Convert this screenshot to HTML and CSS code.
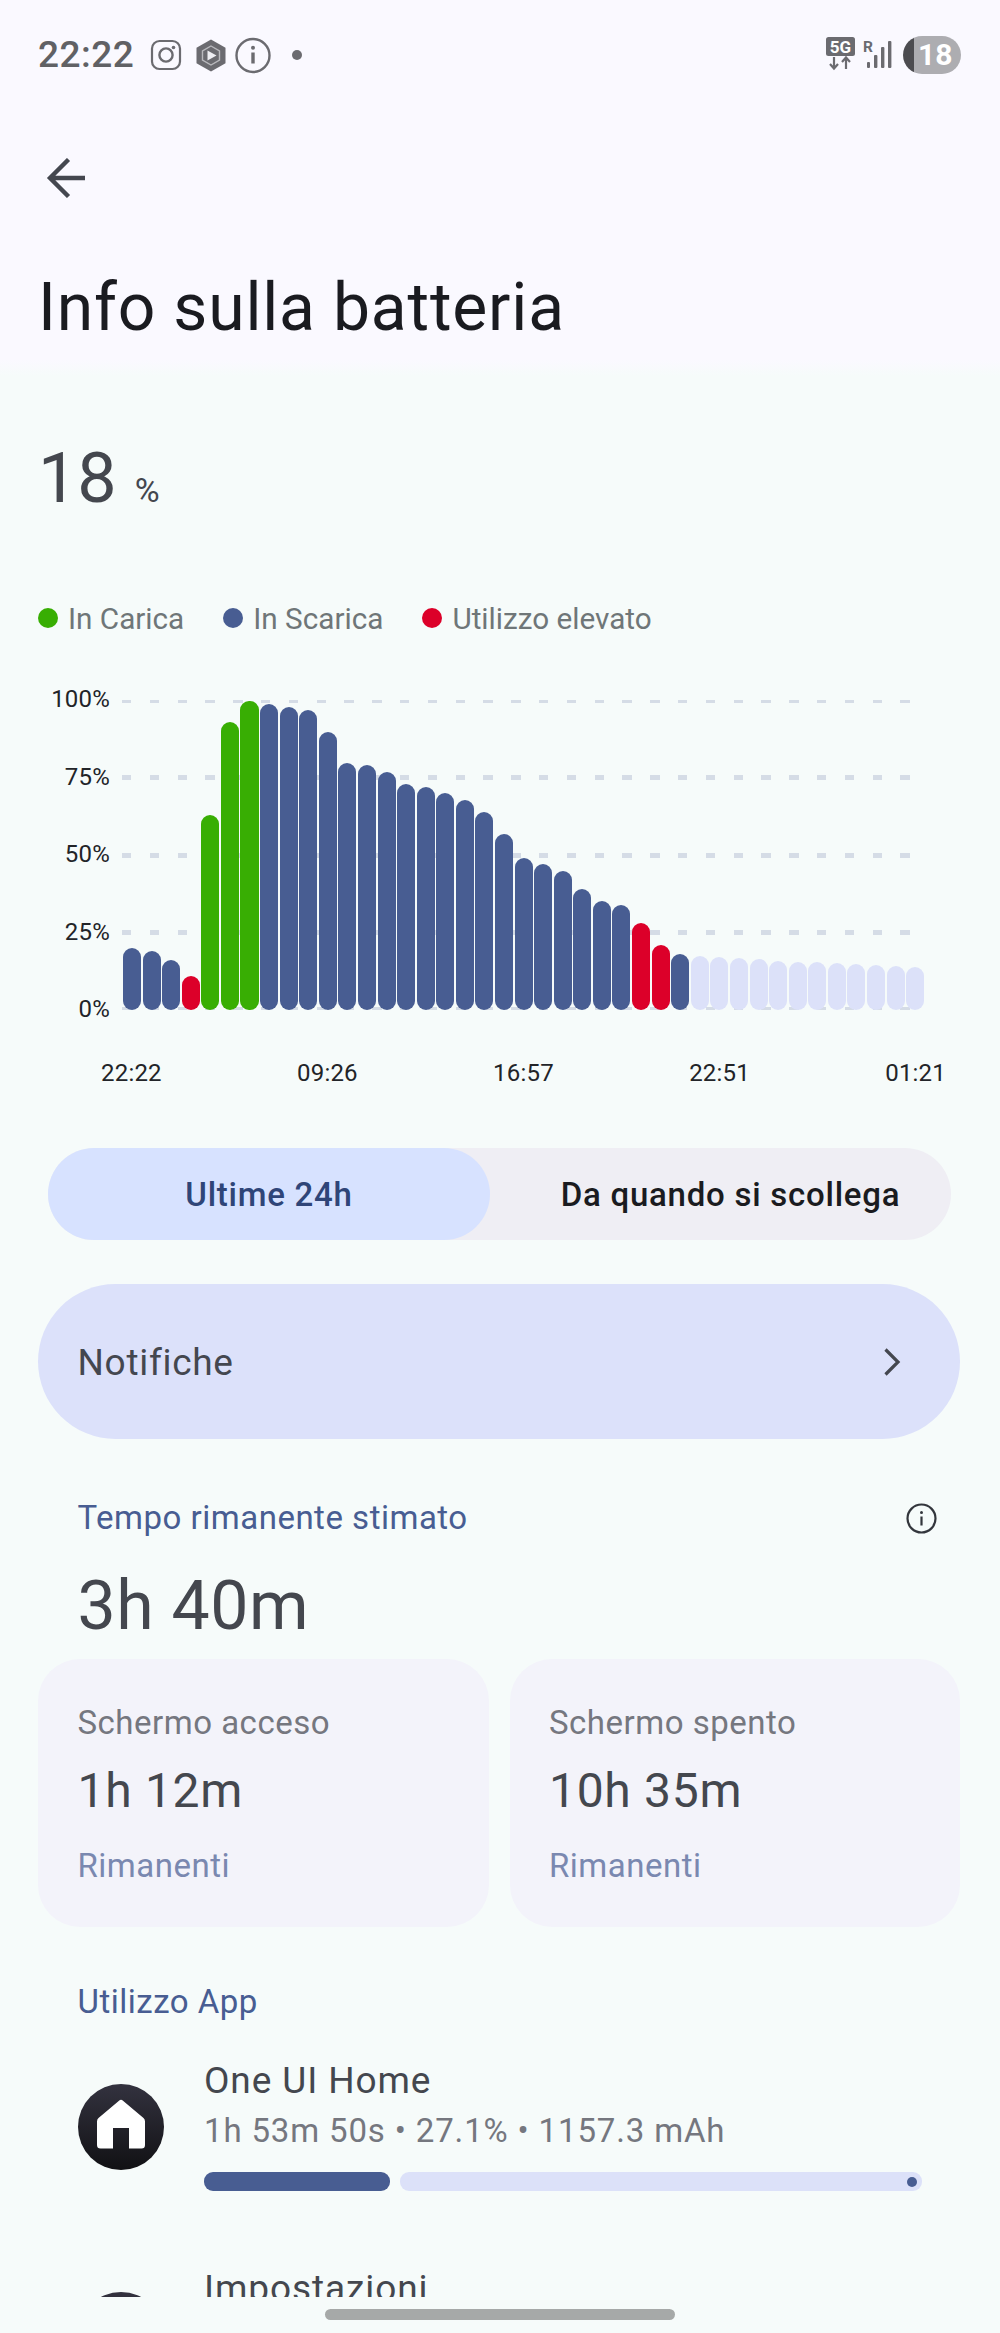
FILE: index.html
```html
<!DOCTYPE html>
<html lang="it">
<head>
<meta charset="utf-8">
<title>Info sulla batteria</title>
<link rel="stylesheet" href="styles.css">
</head>
<body>
<div class="content">
  <header class="status">
    <div class="status-left">
      <span class="clock">22:22</span>
      <svg class="ic-insta" width="32" height="32" viewBox="0 0 32 32"><rect x="2" y="2" width="28" height="28" rx="7.5" fill="none" stroke="#6b6b70" stroke-width="2.2"/><circle cx="16" cy="16" r="6.6" fill="none" stroke="#6b6b70" stroke-width="2.4"/><circle cx="23.5" cy="8.5" r="1.8" fill="#6b6b70"/></svg>
      <svg class="ic-hex" width="30" height="33" viewBox="0 0 30 33"><path d="M15 .5 29.5 8.700V24.300L15 32.500.5 24.300V8.700Z" fill="#6b6b70"/><path d="M15 7 23.500 11.800V21.200L15 26 6.500 21.200V11.800Z" fill="none" stroke="#b9b9bd" stroke-width="1.400"/><path d="M11.500 11.500 20.500 16.500 11.500 21.500Z" fill="#eeeef2"/></svg>
      <svg class="ic-info" width="36" height="37" viewBox="0 0 36 37"><circle cx="18" cy="18.500" r="16.500" fill="none" stroke="#6b6b70" stroke-width="2.400"/><rect x="16.300" y="15.500" width="3.400" height="11" fill="#6b6b70"/><circle cx="18" cy="10.800" r="2" fill="#6b6b70"/></svg>
      <span class="dot-note"></span>
    </div>
    <div class="status-right">
      <svg class="ic-net" width="30" height="36" viewBox="0 0 30 36"><rect x="0" y="0" width="29" height="19" rx="2.500" fill="#6b6b70"/><text x="14.500" y="15.800" class="net-text" text-anchor="middle">5G</text><path d="M8 20V31M4 27 8 31.500 12 27M20 32V21M16 25 20 20.500 24 25" fill="none" stroke="#6b6b70" stroke-width="2.200"/></svg>
      <svg class="ic-signal" width="32" height="38" viewBox="0 0 32 38"><text x="0" y="16" class="roam-text">R</text><rect x="4" y="26" width="3" height="6" rx="1" fill="#6b6b70"/><rect x="11" y="19" width="3.400" height="13" rx="1" fill="#6b6b70"/><rect x="18" y="11" width="3.400" height="21" rx="1" fill="#6b6b70"/><rect x="25" y="5" width="3.400" height="27" rx="1" fill="#6b6b70"/></svg>
      <span class="battery">18</span>
    </div>
  </header>

  <div class="toolbar">
    <svg width="40" height="40" viewBox="0 0 40 40"><path d="M39 20H4M22.500 1.500 4 20 22.500 38.500" fill="none" stroke="#44474f" stroke-width="4.400"/></svg>
  </div>
  <h1 class="title">Info sulla batteria</h1>

  <div class="level"><span class="level-num">18</span><span class="level-unit">%</span></div>

  <div class="legend">
    <span class="legend-item"><i class="dot dot-green"></i>In Carica</span>
    <span class="legend-item"><i class="dot dot-blue"></i>In Scarica</span>
    <span class="legend-item"><i class="dot dot-red"></i>Utilizzo elevato</span>
  </div>

  <div class="chart">
    <div class="y-axis"><span>100%</span><span>75%</span><span>50%</span><span>25%</span><span>0%</span></div>
    <div class="plot">
      <div class="gridlines">
        <span class="gl gl-thin"></span><span class="gl"></span><span class="gl"></span><span class="gl"></span><span class="gl gl-thin"></span>
      </div>
      <div class="bars">
        <i class="bar blue" style="height:62px"></i><i class="bar blue" style="height:59px"></i><i class="bar blue" style="height:50px"></i><i class="bar red" style="height:34px"></i>
        <i class="bar green" style="height:195px"></i><i class="bar green" style="height:288px"></i><i class="bar green" style="height:309px"></i>
        <i class="bar blue" style="height:306px"></i><i class="bar blue" style="height:303px"></i><i class="bar blue" style="height:300px"></i><i class="bar blue" style="height:278px"></i><i class="bar blue" style="height:247px"></i><i class="bar blue" style="height:245px"></i><i class="bar blue" style="height:238px"></i><i class="bar blue" style="height:226px"></i><i class="bar blue" style="height:223px"></i><i class="bar blue" style="height:217px"></i><i class="bar blue" style="height:210px"></i><i class="bar blue" style="height:198px"></i><i class="bar blue" style="height:176px"></i><i class="bar blue" style="height:152px"></i><i class="bar blue" style="height:146px"></i><i class="bar blue" style="height:139px"></i><i class="bar blue" style="height:121px"></i><i class="bar blue" style="height:109px"></i><i class="bar blue" style="height:105px"></i>
        <i class="bar red" style="height:87px"></i><i class="bar red" style="height:65px"></i>
        <i class="bar blue" style="height:56px"></i>
        <i class="bar light" style="height:54px"></i><i class="bar light" style="height:53px"></i><i class="bar light" style="height:52px"></i><i class="bar light" style="height:51px"></i><i class="bar light" style="height:49px"></i><i class="bar light" style="height:48px"></i><i class="bar light" style="height:48px"></i><i class="bar light" style="height:47px"></i><i class="bar light" style="height:46px"></i><i class="bar light" style="height:45px"></i><i class="bar light" style="height:44px"></i><i class="bar light" style="height:43px"></i>
      </div>
    </div>
  </div>
  <div class="x-axis"><span>22:22</span><span>09:26</span><span>16:57</span><span>22:51</span><span>01:21</span></div>

  <div class="tabs">
    <span class="tab tab-active">Ultime 24h</span>
    <span class="tab tab-rest">Da quando si scollega</span>
  </div>

  <div class="notif">
    <span class="notif-label">Notifiche</span>
    <svg width="18" height="28" viewBox="0 0 18 28"><path d="M2.500 1.500 15 14 2.500 26.500" fill="none" stroke="#44474f" stroke-width="3.200"/></svg>
  </div>

  <div class="section-head">
    <span class="section-label">Tempo rimanente stimato</span>
    <svg width="31" height="31" viewBox="0 0 31 31"><circle cx="15.500" cy="15.500" r="14" fill="none" stroke="#33363c" stroke-width="2.200"/><rect x="14.400" y="13.500" width="2.200" height="9" fill="#33363c"/><circle cx="15.500" cy="9.500" r="1.500" fill="#33363c"/></svg>
  </div>
  <div class="remain">3h 40m</div>

  <div class="cards">
    <div class="card">
      <div class="card-label">Schermo acceso</div>
      <div class="card-value">1h 12m</div>
      <div class="card-foot">Rimanenti</div>
    </div>
    <div class="card">
      <div class="card-label">Schermo spento</div>
      <div class="card-value">10h 35m</div>
      <div class="card-foot">Rimanenti</div>
    </div>
  </div>

  <div class="section-label usage-label">Utilizzo App</div>

  <div class="app">
    <div class="app-icon">
      <svg class="home-glyph" width="52" height="50" viewBox="0 0 52 50"><path d="M24 1.800a2.700 2.700 0 0 1 4 0L48.500 19a5 5 0 0 1 1.500 3.500V46a3.500 3.500 0 0 1-3.500 3.500H34V29H18V49.500H5.500A3.500 3.500 0 0 1 2 46V22.500A5 5 0 0 1 3.500 19Z" fill="#fff"/></svg>
    </div>
    <div class="app-body">
      <div class="app-name">One UI Home</div>
      <div class="app-sub">1h 53m 50s • 27.1% • 1157.3 mAh</div>
      <div class="meter"><span class="meter-fill"></span><span class="meter-rest"><i class="meter-dot"></i></span></div>
    </div>
  </div>
  <div class="app app-next">
    <div class="app-icon"></div>
    <div class="app-body"><div class="app-name">Impostazioni</div></div>
  </div>
</div>
<div class="home-bar"></div>
</body>
</html>
```

FILE: styles.css
```css
* { box-sizing: border-box; }
html, body { margin: 0; padding: 0; }
body {
  width: 1000px;
  height: 2333px;
  overflow: hidden;
  font-family: Roboto, "Liberation Sans", sans-serif;
  background: linear-gradient(180deg, #faf9ff 0, #faf9ff 360px, #f6fbfa 376px, #f6fbfa 100%);
  color: #44474e;
}
.content { height: 2297px; overflow: hidden; }

.status { height: 110px; padding: 0 39px 0 38px; display: flex; justify-content: space-between; align-items: center; }
.status-left { display: flex; align-items: center; }
.clock { font-size: 37px; font-weight: 500; color: #606165; letter-spacing: .5px; line-height: 44px; }
.ic-insta { margin-left: 16px; }
.ic-hex { margin-left: 14px; }
.ic-info { margin-left: 9px; }
.dot-note { width: 10px; height: 10px; border-radius: 50%; background: #6b6b70; margin-left: 21px; }
.status-right { display: flex; align-items: center; }
.ic-net { overflow: visible; margin-right: 7px; }
.ic-signal { overflow: visible; margin-right: 8px; }
.net-text { font: 700 17px Roboto, sans-serif; fill: #fff; }
.roam-text { font: 700 15.500px Roboto, sans-serif; fill: #6b6b70; }
.battery {
  width: 58px; height: 38px; border-radius: 19px;
  background: linear-gradient(90deg, #4c4c50 11px, #adadb1 11px);
  color: #fff; font-size: 30px; font-weight: 700; line-height: 38px;
  padding-left: 15px; letter-spacing: 0;
}

.toolbar { height: 136px; padding-left: 46px; display: flex; align-items: center; }
.title { margin: 22px 0 0 38px; font-size: 66px; line-height: 80px; font-weight: 400; color: #1a1b20; letter-spacing: .8px; }

.level { margin: 87.500px 0 0 38px; display: flex; align-items: baseline; gap: 18px; height: 84px; }
.level-num { font-size: 70px; line-height: 84px; color: #44474e; }
.level-unit { font-size: 34px; color: #44474e; }

.legend { margin: 81.500px 0 0 38px; display: flex; height: 36px; font-size: 29.700px; line-height: 36px; color: #6f7678; gap: 39px; }
.legend-item { display: flex; align-items: center; gap: 10px; }
.dot { width: 20px; height: 20px; border-radius: 50%; margin-top: -3px; }
.dot-green { background: #38ae03; }
.dot-blue { background: #485d92; }
.dot-red { background: #dc0029; }

.chart { margin-top: 48px; display: flex; height: 338px; }
.y-axis { width: 110px; display: flex; flex-direction: column; justify-content: space-between; align-items: flex-end; font-size: 24px; line-height: 28px; color: #222428; letter-spacing: .2px; }
.plot { position: relative; margin: 15px 0 13px 12px; width: 802px; height: 310px; }
.gridlines { position: absolute; left: 0; top: 0; bottom: 0; width: 788px; display: flex; flex-direction: column; justify-content: space-between; padding: 0; }
.gl { height: 5px; background: repeating-linear-gradient(90deg, #d5dce6 0, #d5dce6 9.300px, transparent 9.300px, transparent 27.800px); }
.gl-thin { height: 3px; }
.bars { position: absolute; left: 1px; top: 0; bottom: 0; right: 0; display: flex; align-items: flex-end; gap: 1.560px; }
.bar { flex: 1 1 0; border-radius: 9px; display: block; }
.blue { background: #485d92; }
.green { background: #38ae03; }
.red { background: #dc0029; }
.light { background: #dce1f9; }

.x-axis { margin-top: 36px; padding: 0 54px 0 101px; display: flex; justify-content: space-between; font-size: 24px; line-height: 28px; color: #222428; letter-spacing: .2px; }

.tabs { margin: 61px 49px 0 48px; height: 92px; border-radius: 46px; background: #efeef4; display: flex; font-size: 33px; font-weight: 500; letter-spacing: .75px; }
.tab { display: flex; align-items: center; justify-content: center; }
.tab-active { width: 442px; border-radius: 46px; background: #d7e2ff; color: #2f4578; }
.tab-rest { flex: 1; padding-left: 20px; color: #1a1b20; }

.notif { margin: 44px 40px 0 38px; height: 155px; border-radius: 78px; background: #dce1fa; display: flex; align-items: center; justify-content: space-between; padding: 0 59px 0 39.500px; font-size: 37px; letter-spacing: .7px; color: #44474f; }
.notif-label { padding-top: 2px; }

.section-head { margin-top: 59px; padding: 0 63px 0 77.500px; height: 40px; display: flex; align-items: center; justify-content: space-between; }
.section-label { font-size: 33px; line-height: 40px; color: #485d92; letter-spacing: .5px; }
.remain { margin: 28px 0 0 77.500px; font-size: 68px; line-height: 80px; color: #44474e; letter-spacing: .5px; }

.cards { margin: 13px 40px 0 38px; display: flex; gap: 21px; }
.card { flex: 1; height: 268px; border-radius: 42px; background: #f3f3fa; padding: 44px 39.500px 0; }
.card-label { font-size: 33px; line-height: 40px; color: #75777f; letter-spacing: .5px; }
.card-value { margin-top: 20px; font-size: 48px; line-height: 56px; color: #44474e; letter-spacing: .7px; }
.card-foot { margin-top: 27px; font-size: 33px; line-height: 40px; color: #7a88b0; letter-spacing: .5px; }

.usage-label { margin: 55px 0 0 77.500px; }

.app { margin: 37px 0 0 78px; display: flex; gap: 40px; align-items: flex-start; }
.app-next { margin-top: 76px; }
.app-icon { width: 86px; height: 86px; flex: none; margin-top: 25px; border-radius: 50%; background: linear-gradient(180deg, #33323f, #111114); display: flex; align-items: center; justify-content: center; }
.home-glyph { margin-bottom: 6px; }
.app-body { width: 718px; }
.app-name { font-size: 37px; line-height: 44px; color: #44474e; letter-spacing: .9px; }
.app-sub { margin-top: 8px; font-size: 33px; line-height: 40px; color: #75777f; letter-spacing: .85px; }
.meter { margin-top: 21px; height: 19px; display: flex; gap: 10px; }
.meter-fill { width: 186px; border-radius: 9px; background: #485d92; }
.meter-rest { flex: 1; border-radius: 9px; background: #dce1f9; display: flex; align-items: center; justify-content: flex-end; padding-right: 5px; }
.meter-dot { width: 10px; height: 10px; border-radius: 50%; background: #485d92; display: block; }

.home-bar { width: 350px; height: 11px; margin: 12px auto 0; border-radius: 6px; background: #a6a9a8; }
```
